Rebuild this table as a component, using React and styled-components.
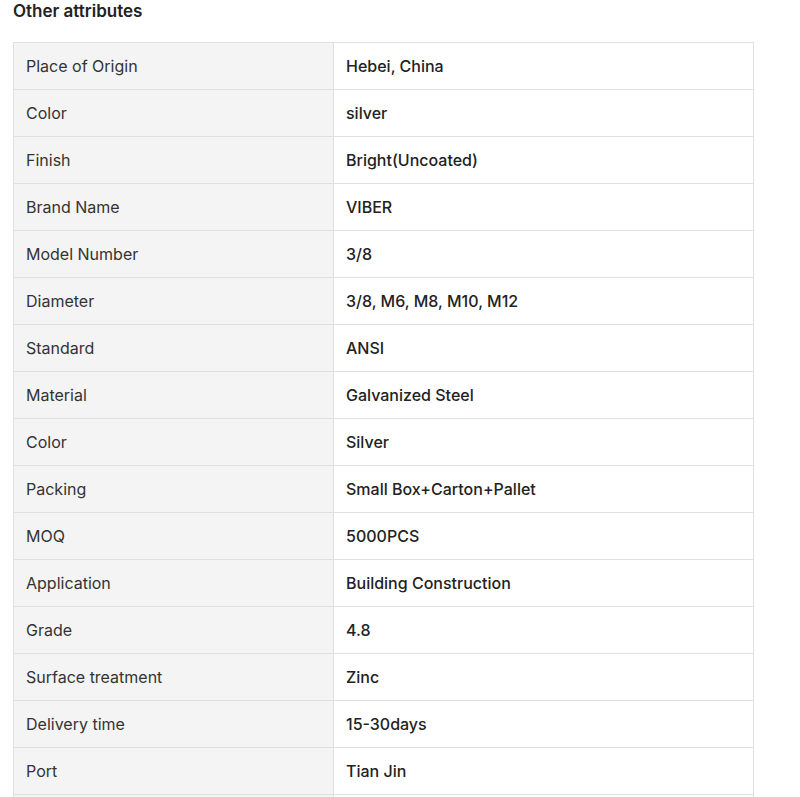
import React from 'react';
import styled, { createGlobalStyle } from 'styled-components';

const GlobalStyle = createGlobalStyle`
  html, body {
    margin: 0;
    padding: 0;
    background: #ffffff;
  }
  body {
    font-family: 'Inter', 'Liberation Sans', sans-serif;
    color: #222222;
  }
`;

const Section = styled.section`
  padding: 0 13px;
`;

const Heading = styled.h3`
  margin: 0 0 20px;
  font-size: 17px;
  line-height: 22px;
  font-weight: 600;
  color: #222222;
`;

const Table = styled.div`
  width: 741px;
  border-top: 1px solid #e0e0e0;
  border-left: 1px solid #e0e0e0;
  box-sizing: border-box;
`;

const Row = styled.div`
  display: flex;
  height: 47px;
`;

const Cell = styled.div`
  box-sizing: border-box;
  display: flex;
  align-items: center;
  width: ${p => (p.$label ? '320px' : '420px')};
  padding: 0 12px;
  font-size: 16px;
  line-height: 22px;
  font-weight: ${p => (p.$label ? 400 : 500)};
  color: ${p => (p.$label ? '#333333' : '#222222')};
  background: ${p => (p.$label ? '#f4f4f4' : '#ffffff')};
  border-right: 1px solid #e0e0e0;
  border-bottom: 1px solid #e0e0e0;
`;

const attributes = [
  ['Place of Origin', 'Hebei, China'],
  ['Color', 'silver'],
  ['Finish', 'Bright(Uncoated)'],
  ['Brand Name', 'VIBER'],
  ['Model Number', '3/8'],
  ['Diameter', '3/8, M6, M8, M10, M12'],
  ['Standard', 'ANSI'],
  ['Material', 'Galvanized Steel'],
  ['Color', 'Silver'],
  ['Packing', 'Small Box+Carton+Pallet'],
  ['MOQ', '5000PCS'],
  ['Application', 'Building Construction'],
  ['Grade', '4.8'],
  ['Surface treatment', 'Zinc'],
  ['Delivery time', '15-30days'],
  ['Port', 'Tian Jin'],
  ['', ''],
];

const App = () => (
  <>
    <GlobalStyle />
    <Section>
      <Heading>Other attributes</Heading>
      <Table>
        {attributes.map(([label, value], i) => (
          <Row key={i}>
            <Cell $label>{label}</Cell>
            <Cell>{value}</Cell>
          </Row>
        ))}
      </Table>
    </Section>
  </>
);

export default App;
